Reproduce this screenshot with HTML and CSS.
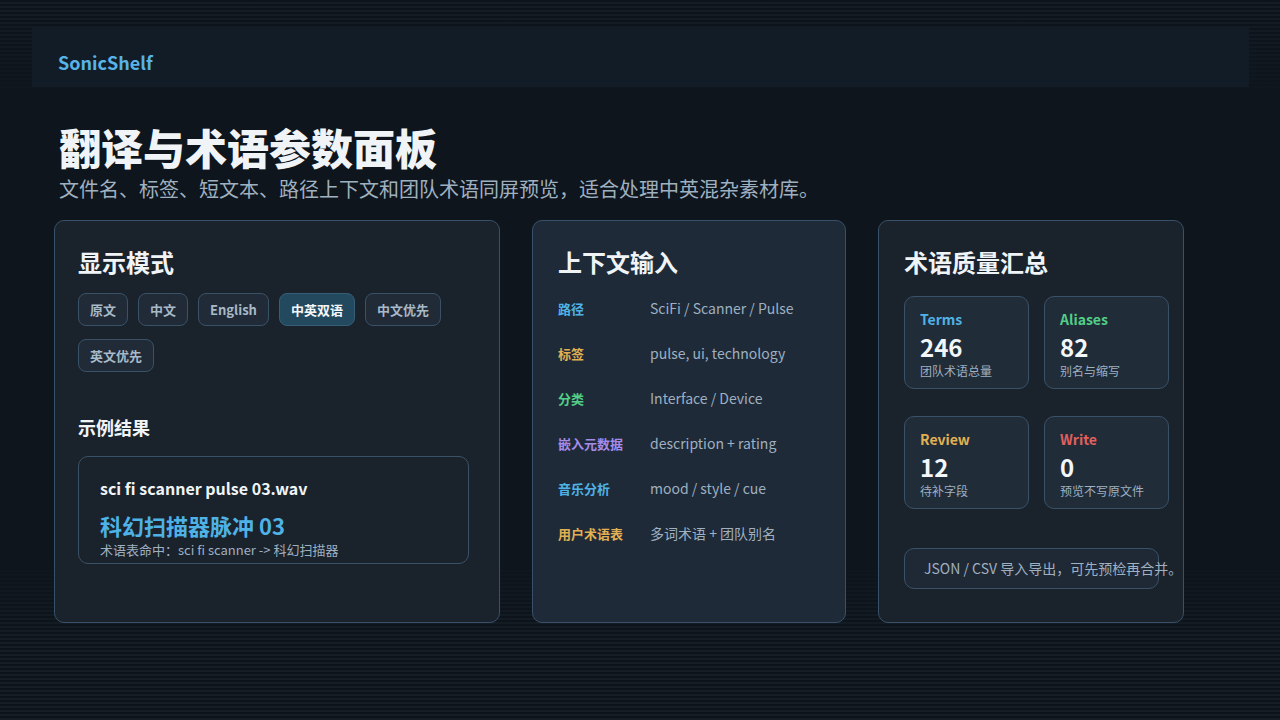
FILE: index.html
```html
<!DOCTYPE html>
<html lang="zh-CN">
<head>
<meta charset="utf-8">
<title>SonicShelf</title>
<link rel="stylesheet" href="styles.css">
</head>
<body>
<div class="page">
  <header class="topbar">
    <div class="brand">SonicShelf</div>
  </header>
  <main class="content">
    <section class="hero">
      <h1 class="title">翻译与术语参数面板</h1>
      <p class="subtitle">文件名、标签、短文本、路径上下文和团队术语同屏预览，适合处理中英混杂素材库。</p>
    </section>
    <section class="cards">
      <div class="card card-mode">
        <h2 class="card-title">显示模式</h2>
        <div class="chips">
          <span class="chip">原文</span>
          <span class="chip">中文</span>
          <span class="chip">English</span>
          <span class="chip chip-active">中英双语</span>
          <span class="chip">中文优先</span>
          <span class="chip">英文优先</span>
        </div>
        <h3 class="sub-title">示例结果</h3>
        <div class="result">
          <div class="result-file">sci fi scanner pulse 03.wav</div>
          <div class="result-cn">科幻扫描器脉冲 03</div>
          <div class="result-note">术语表命中：sci fi scanner -&gt; 科幻扫描器</div>
        </div>
      </div>
      <div class="card card-context">
        <h2 class="card-title">上下文输入</h2>
        <div class="rows">
          <div class="row"><span class="row-label c-blue">路径</span><span class="row-value">SciFi / Scanner / Pulse</span></div>
          <div class="row"><span class="row-label c-yellow">标签</span><span class="row-value">pulse, ui, technology</span></div>
          <div class="row"><span class="row-label c-green">分类</span><span class="row-value">Interface / Device</span></div>
          <div class="row"><span class="row-label c-purple">嵌入元数据</span><span class="row-value">description + rating</span></div>
          <div class="row"><span class="row-label c-blue">音乐分析</span><span class="row-value">mood / style / cue</span></div>
          <div class="row"><span class="row-label c-yellow">用户术语表</span><span class="row-value">多词术语 + 团队别名</span></div>
        </div>
      </div>
      <div class="card card-stats">
        <h2 class="card-title">术语质量汇总</h2>
        <div class="stats">
          <div class="stat"><div class="stat-label c-blue">Terms</div><div class="stat-num">246</div><div class="stat-desc">团队术语总量</div></div>
          <div class="stat"><div class="stat-label c-green">Aliases</div><div class="stat-num">82</div><div class="stat-desc">别名与缩写</div></div>
          <div class="stat"><div class="stat-label c-yellow">Review</div><div class="stat-num">12</div><div class="stat-desc">待补字段</div></div>
          <div class="stat"><div class="stat-label c-red">Write</div><div class="stat-num">0</div><div class="stat-desc">预览不写原文件</div></div>
        </div>
        <div class="note">JSON / CSV 导入导出，可先预检再合并。</div>
      </div>
    </section>
  </main>
</div>
</body>
</html>
```

FILE: styles.css
```css
* { box-sizing: border-box; }
html, body { margin: 0; padding: 0; }
body {
  width: 1280px;
  height: 720px;
  overflow: hidden;
  font-family: "Noto Sans CJK SC", "Noto Sans", sans-serif;
  color: #eef3f7;
  background-color: #0e151c;
  background-image:
    linear-gradient(to bottom, rgba(14,21,28,0) 0px, #0e151c 100px, #0e151c 560px, rgba(14,21,28,0) 640px),
    repeating-linear-gradient(to bottom, #0d131a 0px, #0d131a 2px, #151d25 2px, #151d25 4px);
}
.page { padding: 28px 31px 0 32px; }
.topbar {
  height: 59px;
  background: #121c26;
  padding: 24px 26px 0;
}
.brand {
  font-size: 18px;
  line-height: 21.6px;
  font-weight: 700;
  color: #58b3e6;
}
.content { padding: 0 22px; }
.hero { padding-left: 5px; }
.title {
  margin: 35px 0 0;
  font-size: 42px;
  line-height: 50px;
  font-weight: 900;
  color: #f0f4f7;
}
.subtitle {
  margin: 5px 0 0;
  font-size: 20px;
  line-height: 24px;
  color: #9fb0c0;
}
.cards {
  margin-top: 19px;
  display: grid;
  grid-template-columns: 446px 314px 306px;
  column-gap: 32px;
}
.card {
  height: 403px;
  border: 1px solid #38506a;
  border-radius: 10px;
  background: #1a222c;
  padding: 26px 24px 0 25px;
}
.card-mode { padding-left: 23px; }
.card-context { background: #1e2a38; }
.card-title {
  margin: 0;
  font-size: 24px;
  line-height: 29px;
  font-weight: 700;
  color: #f0f4f7;
}
.chips {
  margin-top: 17px;
  display: flex;
  flex-wrap: wrap;
  column-gap: 10px;
  row-gap: 13px;
}
.chip {
  height: 33px;
  padding: 0 11px;
  border: 1px solid #3a5268;
  border-radius: 8px;
  background: #202b37;
  font-size: 13px;
  line-height: 31px;
  font-weight: 700;
  color: #a8b9c8;
}
.chip-active {
  background: #23495e;
  border-color: #365f77;
  color: #f3f7fa;
}
.sub-title {
  margin: 44px 0 0;
  font-size: 18px;
  line-height: 22px;
  font-weight: 700;
  color: #f0f4f7;
}
.result {
  margin-top: 18px;
  width: 391px;
  height: 108px;
  border: 1px solid #3a5268;
  border-radius: 10px;
  padding: 20px 21px 0;
}
.result-file {
  font-size: 16px;
  line-height: 22px;
  font-weight: 700;
  color: #f0f4f7;
}
.result-cn {
  margin-top: 13px;
  font-size: 22px;
  line-height: 26px;
  font-weight: 700;
  color: #4fb2e6;
}
.result-note {
  margin-top: 4px;
  font-size: 13px;
  line-height: 16px;
  color: #9fb0c0;
}
.rows {
  margin-top: 22px;
  display: flex;
  flex-direction: column;
  row-gap: 25px;
}
.row {
  display: flex;
  align-items: center;
  height: 20px;
}
.row-label {
  width: 92px;
  flex: none;
  font-size: 13px;
  font-weight: 700;
}
.row-value {
  font-size: 14px;
  color: #9fb0c0;
}
.c-blue { color: #4fb2e6; }
.c-yellow { color: #e2b052; }
.c-green { color: #52cf86; }
.c-purple { color: #a68be8; }
.c-red { color: #e0605e; }
.stats {
  margin-top: 20px;
  display: grid;
  grid-template-columns: 125px 125px;
  column-gap: 15px;
  row-gap: 27px;
}
.stat {
  height: 93px;
  border: 1px solid #3a5268;
  border-radius: 10px;
  background: #212c39;
  padding: 13px 15px 0;
}
.stat-label {
  font-size: 14px;
  line-height: 18px;
  font-weight: 700;
}
.stat-num {
  margin-top: 5px;
  font-size: 24px;
  line-height: 28px;
  font-weight: 700;
  color: #f3f7fa;
}
.stat-desc {
  margin-top: 2px;
  font-size: 12px;
  line-height: 16px;
  color: #9fb0c0;
}
.note {
  margin-top: 39px;
  width: 255px;
  height: 41px;
  border: 1px solid #3a5268;
  border-radius: 10px;
  background: #1f2935;
  padding: 0 19px;
  font-size: 14px;
  line-height: 39px;
  white-space: nowrap;
  color: #9fb0c0;
}
```
